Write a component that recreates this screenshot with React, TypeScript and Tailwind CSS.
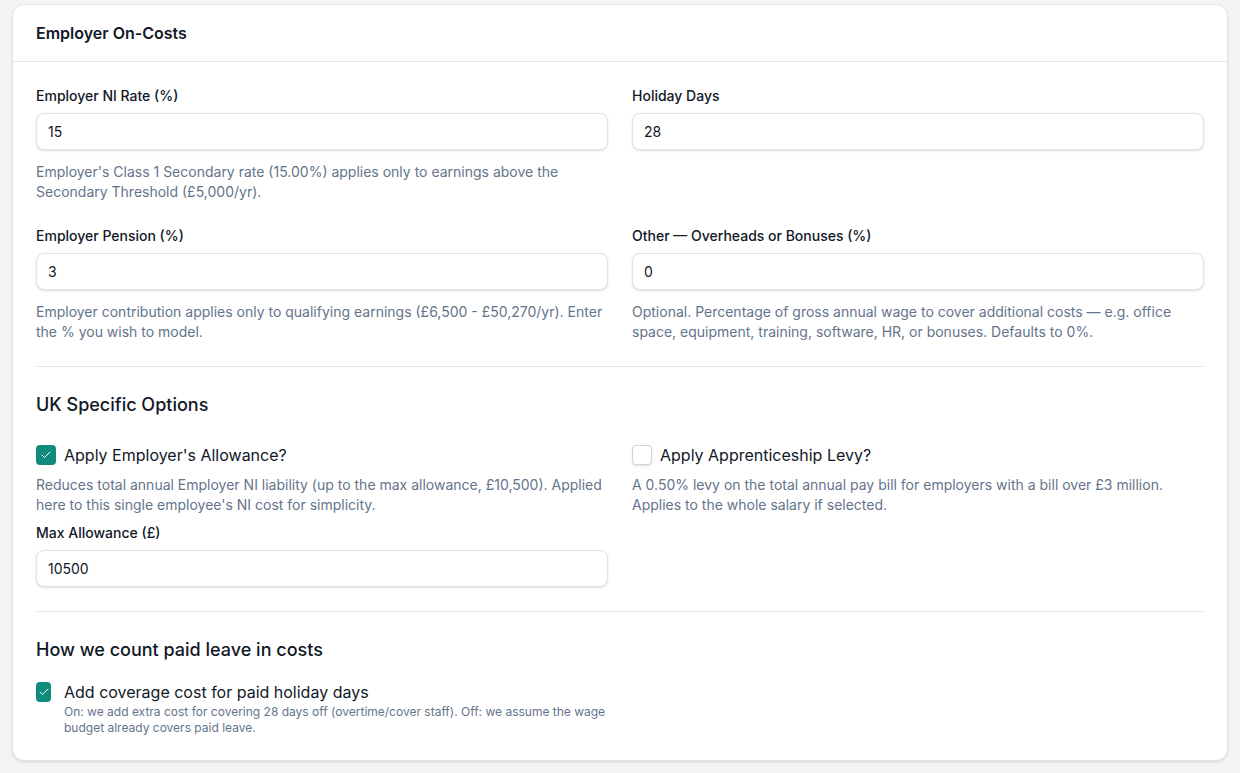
import React from "react";

const font = { fontFamily: 'Inter, "Noto Sans", Arial, sans-serif' };

function Check({ className }: { className?: string }) {
  return (
    <svg viewBox="0 0 24 24" className={className} fill="none" stroke="white" strokeWidth={2} strokeLinecap="round" strokeLinejoin="round">
      <path d="M20 6 9 17l-5-5" />
    </svg>
  );
}

function Field({ label, value, help }: { label: string; value: string; help?: React.ReactNode }) {
  return (
    <div className="flex flex-col">
      <label className="text-sm leading-5 font-medium text-[#111827] mb-[7px]">{label}</label>
      <div className="h-[37px] rounded-lg border border-[#e2e2e2] bg-white shadow-sm px-[11px] flex items-center text-sm text-[#111827]">
        {value}
      </div>
      {help && <p className="mt-3 text-sm leading-5 text-[#64748b]">{help}</p>}
    </div>
  );
}

export default function App() {
  return (
    <div className="min-h-[773px] bg-[#f4f4f2] pt-1 px-3 pb-3" style={font}>
      <div className="bg-white rounded-xl border border-[#e6e6e4] shadow-sm">
        <div className="px-[23px] py-4 border-b border-[#e2e8f0]">
          <h2 className="text-base leading-6 font-semibold text-[#111827]">Employer On-Costs</h2>
        </div>
        <div className="px-[23px] pt-6 pb-6">
          <div className="grid grid-cols-2 gap-x-6 gap-y-6">
            <Field
              label="Employer NI Rate (%)"
              value="15"
              help="Employer's Class 1 Secondary rate (15.00%) applies only to earnings above the Secondary Threshold (£5,000/yr)."
            />
            <Field label="Holiday Days" value="28" />
            <Field
              label="Employer Pension (%)"
              value="3"
              help="Employer contribution applies only to qualifying earnings (£6,500 - £50,270/yr). Enter the % you wish to model."
            />
            <Field
              label="Other — Overheads or Bonuses (%)"
              value="0"
              help="Optional. Percentage of gross annual wage to cover additional costs — e.g. office space, equipment, training, software, HR, or bonuses. Defaults to 0%."
            />
          </div>

          <div className="mt-6 pt-6 border-t border-[#e2e8f0]">
            <h3 className="text-lg leading-7 font-medium text-[#111827]">UK Specific Options</h3>
            <div className="mt-6 grid grid-cols-2 gap-x-6">
              <div className="flex flex-col">
                <div className="flex items-center gap-2">
                  <span className="w-5 h-5 rounded bg-[#0f8a7b] flex items-center justify-center shrink-0">
                    <Check className="w-3 h-3" />
                  </span>
                  <span className="text-base leading-6 text-[#111827]">Apply Employer's Allowance?</span>
                </div>
                <p className="mt-2 text-sm leading-5 text-[#64748b]">
                  Reduces total annual Employer NI liability (up to the max allowance, £10,500). Applied here to this single employee's NI cost for simplicity.
                </p>
                <div className="mt-2">
                  <Field label="Max Allowance (£)" value="10500" />
                </div>
              </div>
              <div className="flex flex-col">
                <div className="flex items-center gap-2">
                  <span className="w-5 h-5 rounded border border-[#d4d4d4] bg-white shadow-sm shrink-0" />
                  <span className="text-base leading-6 text-[#111827]">Apply Apprenticeship Levy?</span>
                </div>
                <p className="mt-2 text-sm leading-5 text-[#64748b]">
                  A 0.50% levy on the total annual pay bill for employers with a bill over £3 million. Applies to the whole salary if selected.
                </p>
              </div>
            </div>
          </div>

          <div className="mt-6 pt-6 border-t border-[#e2e8f0]">
            <h3 className="text-lg leading-7 font-medium text-[#111827]">How we count paid leave in costs</h3>
            <div className="mt-4 grid grid-cols-2 gap-x-6">
              <div className="flex items-start gap-[13px]">
                <span className="mt-0.5 w-[15px] h-5 rounded bg-[#0f8a7b] flex items-center justify-center shrink-0">
                  <Check className="w-3 h-3" />
                </span>
                <div className="flex flex-col">
                  <span className="text-base leading-6 text-[#111827]">Add coverage cost for paid holiday days</span>
                  <p className="text-xs leading-4 text-[#64748b]">
                    On: we add extra cost for covering 28 days off (overtime/cover staff). Off: we assume the wage budget already covers paid leave.
                  </p>
                </div>
              </div>
              <div />
            </div>
          </div>
        </div>
      </div>
    </div>
  );
}
